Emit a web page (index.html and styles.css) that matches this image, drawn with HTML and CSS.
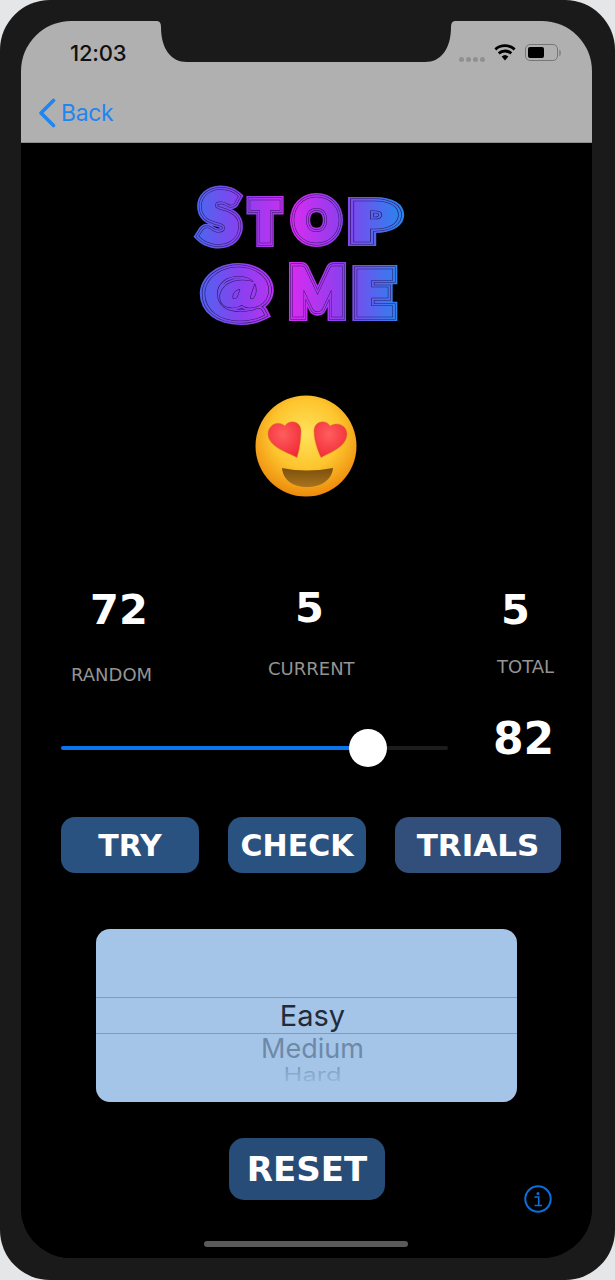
FILE: index.html
```html
<!DOCTYPE html>
<html lang="en">
<head>
<meta charset="utf-8">
<title>Stop @ Me</title>
<link rel="stylesheet" href="styles.css">
</head>
<body>
<div class="device">
  <div class="screen">
    <svg class="notch" viewBox="0 0 298 41" aria-hidden="true"><path d="M0 0Q4 0 4 6C4 28 14 41 30 41H268C284 41 294 28 294 6Q294 0 298 0Z" fill="#1a1a1a"/></svg>
    <header class="nav">
      <div class="status">
        <span class="clock">12:03</span>
        <div class="status-icons">
          <div class="signal"><i></i><i></i><i></i><i></i></div>
          <svg class="wifi" viewBox="0 0 22 17" aria-hidden="true"><path d="M11 16.5l-3.4-4a5 5 0 0 1 6.8 0zM5.7 10.4L3.8 8.2a10.8 10.8 0 0 1 14.4 0l-1.9 2.2a8 8 0 0 0-10.6 0zM2.2 6.4L.4 4.2a16 16 0 0 1 21.2 0l-1.8 2.2a13.4 13.4 0 0 0-17.6 0z" fill="#000"/></svg>
          <div class="battery"><div class="battery-level"></div></div>
          <div class="battery-tip"></div>
        </div>
      </div>
      <div class="back">
        <svg class="chevron" viewBox="0 0 18 30" aria-hidden="true"><path d="M15.5 2.5L3 15l12.5 12.5" fill="none" stroke="#1f86f0" stroke-width="3.6" stroke-linecap="round" stroke-linejoin="round"/></svg>
        <span>Back</span>
      </div>
    </header>
    <main class="main">
      <svg class="logo" viewBox="190 180 215 150" role="img" aria-label="Stop @ Me">
        <defs>
          <linearGradient id="logoGrad" gradientUnits="userSpaceOnUse" x1="196" y1="0" x2="400" y2="0">
            <stop offset="0" stop-color="#4a68ee"/>
            <stop offset="0.22" stop-color="#8a40f0"/>
            <stop offset="0.48" stop-color="#d52cf0"/>
            <stop offset="0.72" stop-color="#8a40ee"/>
            <stop offset="1" stop-color="#2a84ee"/>
          </linearGradient>
          <g id="word" class="logo-word">
            <text x="200" y="242" font-size="68" textLength="39" lengthAdjust="spacingAndGlyphs">S</text>
            <text x="251" y="241" font-size="53" textLength="28" lengthAdjust="spacingAndGlyphs">T</text>
            <text x="294" y="241" font-size="57" textLength="45" lengthAdjust="spacingAndGlyphs">O</text>
            <text x="351" y="240" font-size="51" textLength="46" lengthAdjust="spacingAndGlyphs">P</text>
            <text x="204" y="312" font-size="61" textLength="65" lengthAdjust="spacingAndGlyphs">@</text>
            <text x="290" y="315" font-size="64" textLength="55" lengthAdjust="spacingAndGlyphs">M</text>
            <text x="354" y="315" font-size="60" textLength="39" lengthAdjust="spacingAndGlyphs">E</text>
          </g>
        </defs>
        <use href="#word" fill="url(#logoGrad)" stroke="url(#logoGrad)" stroke-width="12"/>
        <use href="#word" fill="#2e1566" stroke="#2e1566" stroke-width="8.8"/>
        <use href="#word" fill="url(#logoGrad)" stroke="url(#logoGrad)" stroke-width="7.800"/>
        <use href="#word" fill="#2e1566" stroke="#2e1566" stroke-width="4.400"/>
        <use href="#word" fill="url(#logoGrad)" stroke="url(#logoGrad)" stroke-width="3.400"/>
      </svg>
      <svg class="emoji" viewBox="250 391 110 110" aria-hidden="true">
        <defs>
          <radialGradient id="face" cx="0.5" cy="0.38" r="0.62">
            <stop offset="0" stop-color="#ffe25a"/>
            <stop offset="0.55" stop-color="#fdc52e"/>
            <stop offset="1" stop-color="#ed8a0c"/>
          </radialGradient>
          <radialGradient id="heart" cx="0.45" cy="0.35" r="0.7">
            <stop offset="0" stop-color="#ff5e5e"/>
            <stop offset="1" stop-color="#f02a36"/>
          </radialGradient>
          <linearGradient id="mouth" x1="0" y1="0" x2="0" y2="1">
            <stop offset="0" stop-color="#7c4f0c"/>
            <stop offset="1" stop-color="#a8741c"/>
          </linearGradient>
        </defs>
        <circle cx="305" cy="446" r="50.5" fill="url(#face)"/>
        <path d="M296 457.500C288 453 267 447 267 434C267 426 276 419.500 284 426C288 419 300 421 300 431C300 441 298 451 296 457.500Z" fill="url(#heart)" stroke="#d98318" stroke-opacity=".5"/>
        <path d="M320 457.500C328 453 346 447 346 434C346 426 337 421 329 426C325 419 313 421 313 431C313 441 317 451 320 457.500Z" fill="url(#heart)" stroke="#d98318" stroke-opacity=".5"/>
        <path d="M281 468Q305 473 332 468C331 480 320 487 306 487C292 487 282 480 281 468Z" fill="url(#mouth)"/>
      </svg>
      <section class="stats">
        <div class="stat stat-random"><div class="stat-value">72</div><div class="stat-label">RANDOM</div></div>
        <div class="stat stat-current"><div class="stat-value">5</div><div class="stat-label">CURRENT</div></div>
        <div class="stat stat-total"><div class="stat-value">5</div><div class="stat-label">TOTAL</div></div>
      </section>
      <section class="slider-row">
        <div class="slider">
          <div class="slider-fill" style="width: 307px"></div>
          <div class="slider-thumb"></div>
        </div>
        <div class="slider-value">82</div>
      </section>
      <section class="actions">
        <button class="btn btn-small">TRY</button>
        <button class="btn btn-small">CHECK</button>
        <button class="btn btn-wide">TRIALS</button>
      </section>
      <section class="picker">
        <div class="pick pick-selected">Easy</div>
        <div class="pick pick-next">Medium</div>
        <div class="pick pick-last">Hard</div>
      </section>
      <section class="footer-row">
        <button class="btn btn-reset">RESET</button>
        <svg class="info" viewBox="0 0 28 28" aria-hidden="true">
          <circle cx="14" cy="14" r="12.700" fill="none" stroke="#0a6fdc" stroke-width="2"/>
          <circle cx="14" cy="8.500" r="1.500" fill="#0a6fdc"/>
          <path d="M10.500 12h4.200v8M10.500 20.500h7.500" fill="none" stroke="#0a6fdc" stroke-width="1.600"/>
        </svg>
      </section>
      <div class="home-indicator"></div>
    </main>
  </div>
</div>
</body>
</html>
```
FILE: styles.css
```css
* { box-sizing: border-box; }
html, body { margin: 0; padding: 0; }
body { width: 615px; height: 1280px; overflow: hidden; background: #e4e6e8; }

.device {
  width: 615px;
  height: 1280px;
  padding: 21px 23px 22px 21px;
  background: #1a1a1a;
  border-radius: 50px;
}
.screen {
  position: relative;
  display: flex;
  flex-direction: column;
  height: 100%;
  overflow: hidden;
  border-radius: 50px;
  background: #000;
}
.notch { position: absolute; left: 136px; top: 0; width: 298px; height: 41px; }

.nav { height: 122px; background: #b0b0b0; border-bottom: 1px solid #8e8e8e; flex: none; }
.status { display: flex; justify-content: space-between; padding: 20px 31px 0 49px; height: 77px; }
.clock { font: 500 22px/25px Inter, Roboto, sans-serif; color: #111; letter-spacing: -0.2px; }
.status-icons { display: flex; align-items: flex-start; padding-top: 3px; }
.signal { display: flex; gap: 2px; margin-top: 13px; margin-right: 9px; }
.signal i { width: 5px; height: 5px; border-radius: 50%; background: #909090; }
.wifi { width: 22px; height: 17px; margin-right: 9px; }
.battery { width: 33px; height: 17px; border: 1.500px solid #777; border-radius: 5px; padding: 2px; }
.battery-level { width: 16px; height: 100%; background: #000; border-radius: 2px; }
.battery-tip { width: 2px; height: 6px; margin: 6px 0 0 1px; background: #8a8a8a; border-radius: 0 2px 2px 0; }
.back { display: flex; align-items: center; gap: 5px; padding-left: 17px; color: #1f86f0; font: 400 23px/30px Inter, Roboto, sans-serif; letter-spacing: -0.4px; }
.chevron { width: 18px; height: 30px; }

.main { flex: 1; display: flex; flex-direction: column; position: relative; background: #000; }
.logo { display: block; width: 215px; height: 150px; margin: 37px 0 0 169px; }
.logo-word { font-family: Lato, sans-serif; font-weight: 900; stroke-linejoin: miter; stroke-miterlimit: 2; }
.emoji { display: block; width: 110px; height: 110px; margin: 61px 0 0 230px; }

.stats { display: flex; padding-left: 40px; margin-top: 82px; height: 125px; }
.stat { width: 167px; color: #fff; font-family: "DejaVu Sans", sans-serif; }
.stat-value { font-weight: 700; font-size: 41.500px; line-height: 48px; }
.stat-label { font-size: 18px; line-height: 20px; color: #949494; }
.stat-random .stat-value { margin: 3px 0 0 29px; }
.stat-random .stat-label { margin: 31px 0 0 10px; }
.stat-current .stat-value { margin: 1px 0 0 67px; }
.stat-current .stat-label { margin: 27px 0 0 40px; }
.stat-total .stat-value { margin: 3px 0 0 106px; }
.stat-total .stat-label { margin: 23px 0 0 102px; }

.slider-row { display: flex; align-items: center; padding-left: 40px; height: 50px; margin-top: 15px; }
.slider { position: relative; width: 387px; height: 4px; border-radius: 2px; background: #1c1c1c; }
.slider-fill { height: 100%; border-radius: 2px; background: #0a74ea; }
.slider-thumb { position: absolute; left: 288px; top: -17px; width: 38px; height: 38px; border-radius: 50%; background: #fff; }
.slider-value { margin: -18px 0 0 45px; color: #fff; font: 700 44px/50px "DejaVu Sans", sans-serif; }

.actions { display: flex; gap: 29px; padding-left: 40px; margin-top: 44px; }
.btn { display: block; padding: 0; border: 0; color: #fff; font-family: "DejaVu Sans", sans-serif; font-weight: 700; text-align: center; }
.btn-small { width: 138px; height: 56px; border-radius: 14px; background: #2a5280; font-size: 30px; }
.btn-wide { width: 166px; height: 56px; border-radius: 14px; background: #324f7c; font-size: 31px; }

.picker { width: 421px; height: 173px; margin: 56px 0 0 75px; padding-top: 68px; border-radius: 14px; background: #a5c5e8; overflow: hidden; text-align: center; font-family: Inter, Roboto, sans-serif; }
.pick { padding-left: 12px; }
.pick-selected { height: 37px; border-top: 1px solid #7e9cbb; border-bottom: 1px solid #7e9cbb; font-size: 29px; line-height: 36px; color: #1f2c3c; }
.pick-next { height: 30px; font-size: 27px; line-height: 30px; color: #6e89a8; }
.pick-last { height: 26px; margin-top: 2px; font-size: 25.500px; line-height: 24px; color: #7f9cbc; transform: scaleY(0.72); transform-origin: top; -webkit-mask-image: linear-gradient(#000, rgba(0,0,0,.25)); mask-image: linear-gradient(#000, rgba(0,0,0,.25)); }

.footer-row { display: flex; align-items: flex-start; padding-left: 208px; margin-top: 36px; }
.btn-reset { width: 156px; height: 62px; border-radius: 15px; background: #284c78; font-size: 34px; }
.info { width: 28px; height: 28px; margin: 47px 0 0 139px; }

.home-indicator { width: 204px; height: 6px; margin: 28px 0 0 183px; border-radius: 3px; background: #5a5a5a; }
```
